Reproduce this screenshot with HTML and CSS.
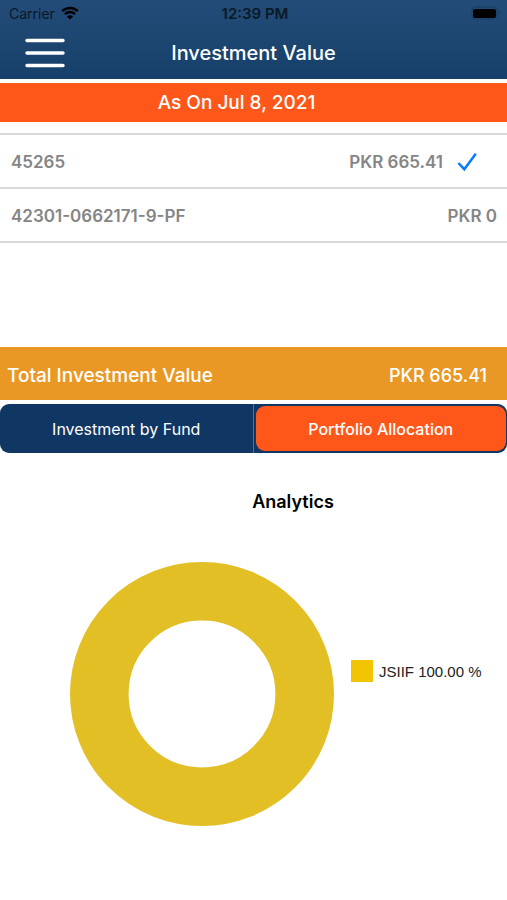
FILE: index.html
```html
<!DOCTYPE html>
<html lang="en">
<head>
<meta charset="utf-8">
<meta name="viewport" content="width=device-width, initial-scale=1">
<title>Investment Value</title>
<link rel="stylesheet" href="styles.css">
</head>
<body>
<header class="header">
  <div class="status">
    <div class="carrier">
      <span>Carrier</span>
      <svg class="wifi" viewBox="0 0 18 14" aria-hidden="true">
        <path d="M1.200 5.200C5.400 .9 12.600 .9 16.800 5.200M4 8.100c2.800-2.700 7.200-2.700 10 0" fill="none" stroke="currentColor" stroke-width="2.500"/>
        <path d="M9 13.600 5.900 10.400c1.700-1.600 4.500-1.600 6.200 0z" fill="currentColor"/>
      </svg>
    </div>
    <time class="clock">12:39 PM</time>
    <svg class="battery" viewBox="0 0 30 14" aria-hidden="true">
      <rect x="1" y="1" width="25" height="12" rx="4" fill="none" stroke="#1c3f63" stroke-width="1"/>
      <rect x="2" y="3" width="23" height="9" rx="2" fill="#000"/>
      <path d="M27.500 5c2 .7 2 3.300 0 4z" fill="#1c3f63"/>
    </svg>
  </div>
  <div class="nav">
    <button class="menu" type="button" aria-label="Menu">
      <svg viewBox="0 0 40 30" aria-hidden="true"><path d="M2 2.500h36M2 15h36M2 27.500h36" stroke="#fff" stroke-width="3.400" stroke-linecap="round"/></svg>
    </button>
    <h1 class="title">Investment Value</h1>
  </div>
</header>
<main>
  <p class="date">As On Jul 8, 2021</p>
  <ul class="accounts">
    <li><button class="account" type="button" aria-pressed="true">
      <span>45265</span>
      <span class="amount">PKR 665.41</span>
      <svg class="check" viewBox="0 0 20 20" aria-hidden="true"><path d="M1.400 11 7.300 17.200 18.800 1.800" fill="none" stroke="#0a7aff" stroke-width="2.500"/></svg>
    </button></li>
    <li><button class="account" type="button" aria-pressed="false">
      <span>42301-0662171-9-PF</span>
      <span class="amount">PKR 0</span>
    </button></li>
  </ul>
  <div class="total">
    <span class="total-label">Total Investment Value</span>
    <span>PKR 665.41</span>
  </div>
  <div class="segments">
    <button class="segment" type="button" aria-pressed="false">Investment by Fund</button>
    <button class="segment selected" type="button" aria-pressed="true">Portfolio Allocation</button>
  </div>
  <section class="analytics">
    <h2 class="heading">Analytics</h2>
    <div class="chart">
      <svg class="donut" viewBox="0 0 264 264" role="img" aria-label="JSIIF 100.00 %"><circle cx="132" cy="132" r="102.700" fill="none" stroke="#e3bf26" stroke-width="58.600"/></svg>
      <div class="legend"><span class="swatch"></span><span>JSIIF 100.00 %</span></div>
    </div>
  </section>
</main>
</body>
</html>
```
FILE: styles.css
```css
* { box-sizing: border-box; }
body {
  margin: 0;
  background: #fff;
  color: #000;
  font-family: Inter, "Liberation Sans", sans-serif;
}
h1, h2, p, ul { margin: 0; padding: 0; font-weight: 500; }
ul { list-style: none; }
button { margin: 0; border: 0; padding: 0; background: none; font: inherit; color: inherit; cursor: pointer; }
svg { display: block; flex: none; }

.header { background: linear-gradient(#234c78, #163f69); }
.status {
  display: grid;
  grid-template-columns: 1fr auto 1fr;
  align-items: center;
  height: 26px;
  padding: 0 6px 0 9px;
  font-size: 14px;
}
.carrier { display: flex; align-items: center; gap: 6px; color: #0b1826; }
.wifi { width: 18px; height: 14px; color: #000; }
.clock { font-size: 15px; font-weight: 600; color: #0b1826; }
.battery { width: 30px; height: 14px; justify-self: end; }
.nav {
  display: grid;
  grid-template-columns: 1fr auto 1fr;
  align-items: center;
  height: 53px;
  padding: 0 25px;
}
.menu { justify-self: start; }
.menu svg { width: 40px; height: 30px; }
.title { font-size: 20px; line-height: 24px; color: #fff; }

.date {
  margin-top: 4px;
  padding: 1px 34px 0 0;
  background: #ff571a;
  color: #fff;
  text-align: center;
  font-size: 19px;
  line-height: 38px;
}
.accounts {
  min-height: 214px;
  margin-top: 11px;
  border-top: 2px solid #d9d9d9;
}
.account {
  display: flex;
  align-items: center;
  width: 100%;
  height: 54px;
  padding: 2px 10px 0 11px;
  border-bottom: 2px solid #d9d9d9;
  color: #858585;
  font-size: 17px;
  font-weight: 600;
}
.amount { margin-left: auto; }
.check { width: 20px; height: 20px; margin: 0 20px 0 14px; }

.total {
  display: flex;
  align-items: center;
  justify-content: space-between;
  height: 53px;
  padding: 3px 20px 0 7px;
  background: #ea9825;
  color: #fff;
  font-size: 18px;
  font-weight: 500;
}
.total-label { font-size: 19px; }
.segments {
  display: grid;
  grid-template-columns: 1fr 1fr;
  height: 49px;
  margin-top: 4px;
  border-radius: 9px;
  background: #103664;
}
.segment {
  border-right: 1px solid #5a7290;
  color: #fff;
  font-size: 16px;
}
.segment.selected {
  margin: 2px 1px 2px 2px;
  border: 0;
  border-radius: 9px;
  background: #ff571a;
  font-weight: 500;
}

.analytics { padding-top: 37px; }
.heading {
  padding-left: 79px;
  text-align: center;
  font-size: 18px;
  font-weight: 600;
  line-height: 24px;
}
.chart {
  display: flex;
  align-items: center;
  gap: 17px;
  margin-top: 48px;
  padding: 0 20px 0 70px;
}
.donut { width: 264px; height: 264px; }
.legend {
  display: flex;
  align-items: center;
  gap: 6px;
  padding-bottom: 46px;
  color: #222;
  font-family: "Liberation Sans", sans-serif;
  font-size: 15px;
  white-space: nowrap;
}
.swatch { width: 22px; height: 22px; background: #f3c404; }
```
